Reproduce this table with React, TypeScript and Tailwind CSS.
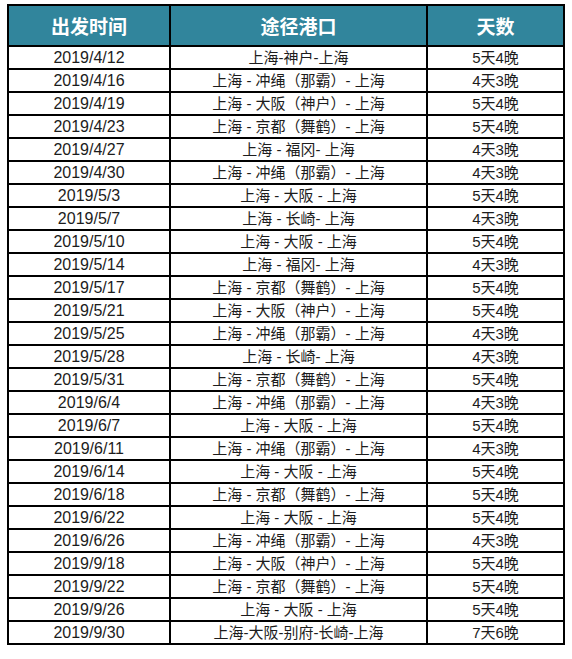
const rows: [string, string, string][] = [
  ["2019/4/12", "上海-神户-上海", "5天4晚"],
  ["2019/4/16", "上海 - 冲绳（那霸）- 上海", "4天3晚"],
  ["2019/4/19", "上海 - 大阪（神户）- 上海", "5天4晚"],
  ["2019/4/23", "上海 - 京都（舞鹤）- 上海", "5天4晚"],
  ["2019/4/27", "上海 - 福冈- 上海", "4天3晚"],
  ["2019/4/30", "上海 - 冲绳（那霸）- 上海", "4天3晚"],
  ["2019/5/3", "上海 - 大阪 - 上海", "5天4晚"],
  ["2019/5/7", "上海 - 长崎- 上海", "4天3晚"],
  ["2019/5/10", "上海 - 大阪 - 上海", "5天4晚"],
  ["2019/5/14", "上海 - 福冈- 上海", "4天3晚"],
  ["2019/5/17", "上海 - 京都（舞鹤）- 上海", "5天4晚"],
  ["2019/5/21", "上海 - 大阪（神户）- 上海", "5天4晚"],
  ["2019/5/25", "上海 - 冲绳（那霸）- 上海", "4天3晚"],
  ["2019/5/28", "上海 - 长崎- 上海", "4天3晚"],
  ["2019/5/31", "上海 - 京都（舞鹤）- 上海", "5天4晚"],
  ["2019/6/4", "上海 - 冲绳（那霸）- 上海", "4天3晚"],
  ["2019/6/7", "上海 - 大阪 - 上海", "5天4晚"],
  ["2019/6/11", "上海 - 冲绳（那霸）- 上海", "4天3晚"],
  ["2019/6/14", "上海 - 大阪 - 上海", "5天4晚"],
  ["2019/6/18", "上海 - 京都（舞鹤）- 上海", "5天4晚"],
  ["2019/6/22", "上海 - 大阪 - 上海", "5天4晚"],
  ["2019/6/26", "上海 - 冲绳（那霸）- 上海", "4天3晚"],
  ["2019/9/18", "上海 - 大阪（神户）- 上海", "5天4晚"],
  ["2019/9/22", "上海 - 京都（舞鹤）- 上海", "5天4晚"],
  ["2019/9/26", "上海 - 大阪 - 上海", "5天4晚"],
  ["2019/9/30", "上海-大阪-别府-长崎-上海", "7天6晚"],
];

export default function App() {
  return (
    <div className="w-[572px] h-[659px] bg-white pl-[7px] pt-[4px] font-['Liberation_Sans','Noto_Sans_CJK_SC',sans-serif] text-[#1c1c1c]">
      <table className="w-[556px] table-fixed border-collapse border-2 border-black">
        <colgroup>
          <col className="w-[162px]" />
          <col className="w-[257px]" />
          <col className="w-[137px]" />
        </colgroup>
        <thead>
          <tr className="h-[41px] bg-[#31859c] text-white text-[19px] font-bold font-['Noto_Sans_CJK_SC',sans-serif]">
            <th className="border-2 border-black leading-none">出发时间</th>
            <th className="border-2 border-black leading-none">途径港口</th>
            <th className="border-2 border-black leading-none">天数</th>
          </tr>
        </thead>
        <tbody>
          {rows.map(([date, route, days]) => (
            <tr key={date} className="h-[23px] text-center">
              <td className="border-2 border-black p-0 text-[16px] leading-none">{date}</td>
              <td className="border-2 border-black p-0 text-[15px] leading-none">{route}</td>
              <td className="border-2 border-black p-0 text-[15px] leading-none">{days}</td>
            </tr>
          ))}
        </tbody>
      </table>
    </div>
  );
}
